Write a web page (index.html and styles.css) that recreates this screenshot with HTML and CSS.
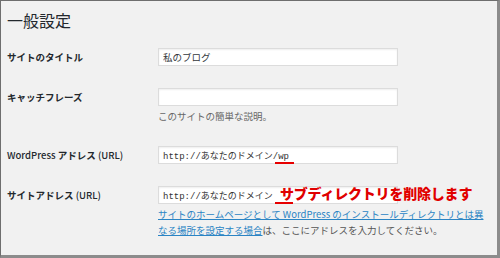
FILE: index.html
```html
<!DOCTYPE html>
<html lang="ja">
<head>
  <meta charset="UTF-8" />
  <meta name="viewport" content="width=device-width, initial-scale=1.0"/>
  <title>一般設定</title>
  <link rel="stylesheet" href="styles.css">
</head>
<body>

  <div class="frame">
    <h1>一般設定</h1>

    <div class="field">
      <label class="field-label" for="blogname">サイトのタイトル</label>
      <div class="field-control">
        <input type="text" id="blogname" class="text" value="私のブログ" />
      </div>
    </div>

    <div class="field">
      <label class="field-label" for="blogdescription">キャッチフレーズ</label>
      <div class="field-control">
        <input type="text" id="blogdescription" class="text" value="" />
        <p class="description">このサイトの簡単な説明。</p>
      </div>
    </div>

    <div class="field">
      <label class="field-label" for="siteurl"><span class="latin">WordPress</span> アドレス <span class="latin">(URL)</span></label>
      <div class="field-control">
        <input type="text" id="siteurl" class="text code" value="http://あなたのドメイン/wp" />
        <span class="mark mark-wp"></span>
      </div>
    </div>

    <div class="field">
      <label class="field-label" for="home">サイトアドレス <span class="latin">(URL)</span></label>
      <div class="field-control">
        <input type="text" id="home" class="text code" value="http://あなたのドメイン" />
        <span class="mark mark-sub"></span>
        <span class="note">サブディレクトリを削除します</span>
        <p class="description link-desc"><a href="#">サイトのホームページとして WordPress のインストールディレクトリとは異<br>なる場所を設定する場合</a>は、ここにアドレスを入力してください。</p>
      </div>
    </div>
  </div>

</body>
</html>
```

FILE: styles.css
```css
body {
  margin: 0;
  padding: 0;
  background-color: #fff;
  font-family: 'Noto Sans CJK JP', 'Noto Sans', sans-serif;
  color: #23282d;
}

.frame {
  box-sizing: border-box;
  width: 500px;
  height: 258px;
  padding: 0 0 0 6px;
  background-color: #f1f1f1;
  border: 1px solid #6e6e6e;
  border-right: 3px solid #8c8c8c;
  border-bottom: 3px solid #8c8c8c;
  overflow: hidden;
}

h1 {
  margin: 9px 0 7px;
  font-size: 16px;
  line-height: 20px;
  font-weight: 400;
  color: #23282d;
}

.field {
  display: grid;
  grid-template-columns: 151px 1fr;
  align-items: start;
  padding: 11px 0;
}

.field-label {
  font-size: 9.5px;
  line-height: 18px;
  font-weight: bold;
  color: #23282d;
}

.field-label .latin {
  font-weight: 500;
}

.field-control {
  position: relative;
}

input.text {
  display: block;
  box-sizing: border-box;
  width: 240px;
  height: 18px;
  margin: 0;
  padding: 0 4px;
  border: 1px solid #dcdcdc;
  box-shadow: inset 0 1px 2px rgba(0,0,0,0.07);
  background-color: #fff;
  font-family: 'Noto Sans CJK JP', sans-serif;
  font-size: 9.5px;
  color: #32373c;
  outline: none;
}

input.code {
  font-family: 'Liberation Mono', 'Noto Sans CJK JP', monospace;
  font-size: 9px;
  color: #333;
}

.description {
  margin: 2px 0 0;
  font-size: 9.5px;
  line-height: 16px;
  color: #666;
}

.link-desc {
  color: #555;
}

.link-desc a {
  color: #2a84c4;
  text-decoration: underline;
}

/* 赤い注釈 */
.mark {
  position: absolute;
  height: 2px;
  background-color: #e60000;
}

.mark-wp {
  left: 117px;
  top: 16px;
  width: 19px;
}

.mark-sub {
  left: 117px;
  top: 16px;
  width: 18px;
}

.note {
  position: absolute;
  left: 122px;
  top: -2px;
  font-size: 14px;
  line-height: 18px;
  font-weight: 900;
  letter-spacing: -0.2px;
  color: #e00000;
  white-space: nowrap;
  text-shadow: 0 0 1px #fff;
}
```
